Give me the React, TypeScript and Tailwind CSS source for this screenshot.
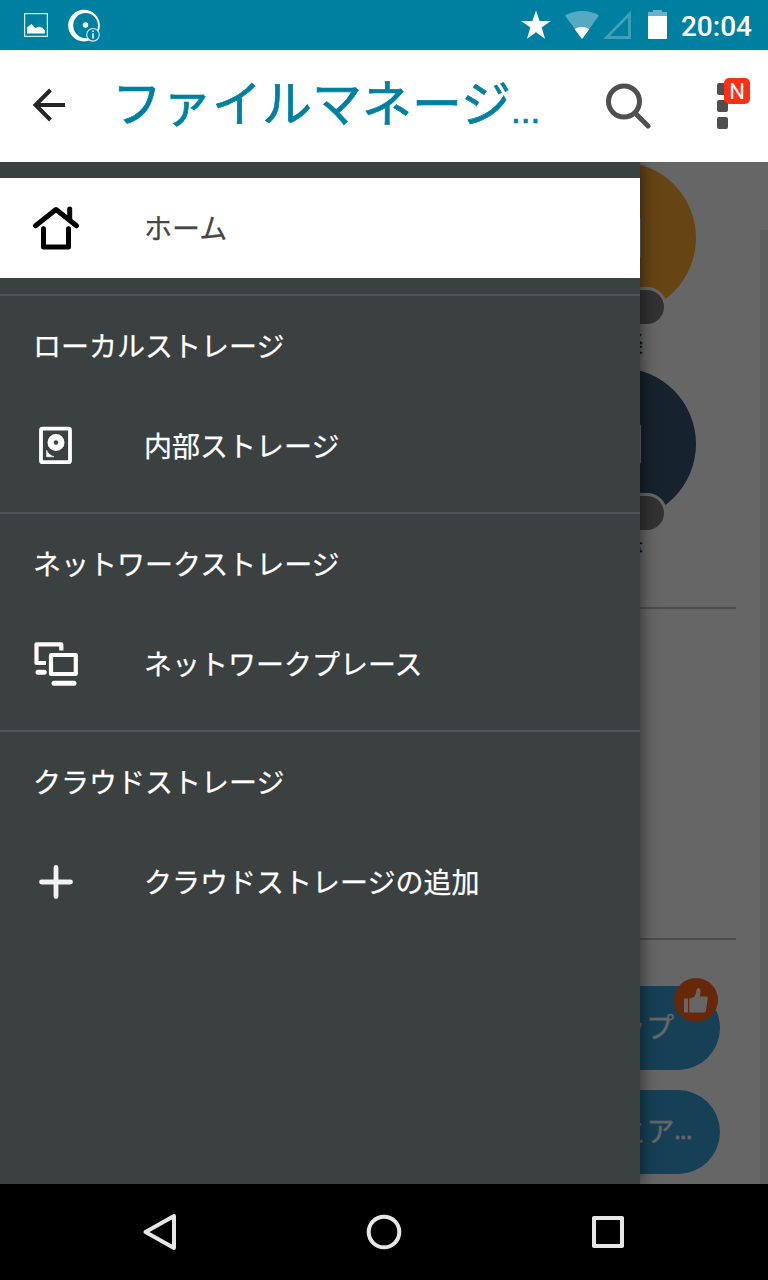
import type { ReactNode } from "react"

const StatusBar = () => (
    <div className="flex h-[50px] items-center justify-between bg-[#0080a1] text-white">
        <div className="flex items-center pl-6">
            <svg width="24" height="24" viewBox="0 0 24 24">
                <rect x="0.6" y="0.6" width="22.8" height="22.8" fill="none" stroke="#cfe8ef" strokeWidth="1.3" />
                <path d="M3 14.5 7.3 11l4 4 3.7-1.2 3.5 1 2.3 2.5V20.5H3z" fill="#fff" />
            </svg>
            <svg className="ml-5" width="33" height="33" viewBox="0 0 33 33">
                <path fillRule="evenodd" d="M16 .8a15.8 15.8 0 1 0 0 31.6A15.8 15.8 0 1 0 16 .8zm1.6 3.2a12.4 12.6 0 1 1 0 25.2 12.4 12.6 0 1 1 0-25.2z" fill="#fff" />
                <circle cx="17.5" cy="16" r="2.7" fill="#fff" />
                <circle cx="25" cy="25.8" r="6.3" fill="#0080a1" stroke="#d8ecf1" strokeWidth="1.1" />
                <path d="M25 24.3v5.2M25 21.6v1.4" stroke="#fff" strokeWidth="1.5" />
            </svg>
        </div>
        <div className="flex items-center pr-4">
            <svg width="30" height="30" viewBox="0 0 30 30" fill="#fff">
                <path d="M15 0.5 18.6 11H29.7L20.7 17.6 24 28.7 15 22.2 6 28.7 9.3 17.6 0.3 11H11.4z" />
            </svg>
            <svg className="ml-3.5" width="34" height="28" viewBox="0 0 34 28">
                <path d="M0 4.5Q7 0 17 0t17 4.5L17 28z" fill="#55a9c0" />
                <path d="M9.6 18Q13 16 17 16t7.4 2L17 28z" fill="#fff" />
            </svg>
            <svg className="ml-1" width="29" height="28" viewBox="0 0 29 28">
                <path d="M3.5 26.5H26.5V3z" fill="none" stroke="#409fb9" strokeWidth="2.8" />
            </svg>
            <svg className="mb-px ml-4" width="19" height="29" viewBox="0 0 19 29">
                <path d="M5 0h9v2h5v4H0V2h5z" fill="#66b3c7" />
                <path d="M0 6h19v23H0z" fill="#fff" />
            </svg>
            <span className="ml-[13px] w-[72px] whitespace-nowrap pt-1 text-right font-['Roboto',sans-serif] text-[28px] leading-none font-medium">20:04</span>
        </div>
    </div>
)

const ActionBar = () => (
    <div className="flex h-[112px] items-center bg-white">
        <svg className="mb-[3px] ml-8" width="34" height="36" viewBox="0 0 34 36" fill="none" stroke="#262626" strokeWidth="4">
            <path d="M33 18H4M18.5 3 3.5 18l15 15" />
        </svg>
        <h1 className="ml-[46px] flex h-[70px] w-[441px] whitespace-nowrap pt-1 text-[50px] leading-none font-normal text-[#0080a1] [-webkit-text-stroke:0.7px_#0080a1]">
            ファイルマネージ
            <span className="pt-[11px] font-['Liberation_Sans',sans-serif] text-[35px] leading-[50px]">...</span>
        </h1>
        <svg className="ml-[52px]" width="46" height="46" viewBox="0 0 46 46" fill="none" stroke="#4f4f4f" strokeWidth="5" strokeLinecap="round">
            <circle cx="19" cy="18.5" r="15.5" />
            <path d="m31 31 12 12" />
        </svg>
        <div className="relative ml-[66px] flex w-[11px] flex-col gap-[5px]">
            <span className="h-3 rounded-xs bg-[#4f4f4f]" />
            <span className="h-3 rounded-xs bg-[#4f4f4f]" />
            <span className="h-3 rounded-xs bg-[#4f4f4f]" />
            <span className="absolute -top-[5px] left-[7px] flex size-[26px] items-center justify-center rounded-[5px] bg-[#ff2f14] pt-0.5 font-['Roboto',sans-serif] text-[22px] leading-none text-white">N</span>
        </div>
    </div>
)

const Category = ({ label, color }: { label: string; color: string }) => (
    <div className="flex h-[206px] w-[152px] flex-col items-center">
        <div className={`relative flex size-[152px] shrink-0 items-center justify-center rounded-full ${color}`}>
            <span className="h-10 w-[42px] rounded-xs border-2 border-white" />
            <span className="absolute top-[125px] right-[29px] h-[40px] w-[90px] rounded-[20px] border-3 border-white bg-[#7d7d7d]" />
        </div>
        <span className="mt-3.5 text-[23px] leading-7 text-[#222] [-webkit-text-stroke:0.5px_#222]">{label}</span>
    </div>
)

const Page = () => (
    <div className="flex h-full flex-col bg-white">
        <div className="flex h-[445px] flex-col items-end pr-[72px]">
            <Category label="音楽" color="bg-[#ffaa32]" />
            <Category label="文書" color="bg-[#375571]" />
        </div>
        <div className="mx-8 h-[333px] border-y-2 border-[#bebebe]" />
        <div className="mt-[46px] flex flex-col items-end gap-5 pr-12 text-[28px] leading-none text-white [-webkit-text-stroke:0.3px_#fff]">
            <div className="relative flex h-[84px] w-[326px] items-center justify-end rounded-full bg-[#37a0d7] pr-[46px] pb-1">
                クリーンアップ
                <span className="absolute -top-2 right-0.5 flex size-11 items-center justify-center rounded-full bg-[#ff6416]">
                    <svg width="24" height="25" viewBox="0 0 24 25" fill="#fff">
                        <path d="M0 10.5h4v14H0zM5.3 10.5 9.8 9.2Q12.2 7 12.4 2.2 12.8 0 14.5 0q2.2.3 2.2 3L15.8 8.5h6.5q1.7 0 1.5 1.7L21.8 23q-.2 1.5-2 1.5H5.3z" />
                    </svg>
                </span>
            </div>
            <div className="flex h-[84px] w-[326px] items-center justify-end rounded-full bg-[#37a0d7] pr-[28px] pb-1">
                ファイルとア<span className="pt-1 font-['Liberation_Sans',sans-serif] text-[21px] leading-[38px] font-bold">...</span>
            </div>
        </div>
    </div>
)

const HomeIcon = () => (
    <svg width="48" height="48" viewBox="32 204 48 48" fill="none" stroke="#000" strokeWidth="5" strokeLinecap="round" strokeLinejoin="round">
        <path d="M35.5 225.8 56 209.5 76.5 225.8M69.7 209v10" />
        <path d="M43.5 228.8V247h25V228.8" />
    </svg>
)

const DiskIcon = () => (
    <svg width="48" height="48" viewBox="32 422 48 48" fill="none" stroke="#fff">
        <rect x="41" y="428.7" width="29" height="33.5" rx="1.5" strokeWidth="3.8" />
        <circle cx="56" cy="442.5" r="5.4" strokeWidth="6.2" />
        <path d="M46.5 450q1.5 4.5 7.5 6.8h-7.5z" fill="#fff" strokeWidth="0.5" />
    </svg>
)

const NetworkIcon = () => (
    <svg width="48" height="48" viewBox="32 640 48 48" fill="none" stroke="#fffafa" strokeWidth="4.2" strokeLinejoin="round">
        <path d="M61.3 650.5V644.3H36.5V663H46" />
        <rect x="51" y="655" width="24.8" height="19" />
        <path d="M38 672.3h6.2M54 683.2h20" strokeWidth="5" strokeLinecap="round" />
    </svg>
)

const PlusIcon = () => (
    <svg width="48" height="48" viewBox="0 0 48 48" fill="none" stroke="#f2f2f2" strokeWidth="4.8" strokeLinecap="round">
        <path d="M24 9.5v29M9.5 24h29" />
    </svg>
)

const DrawerItem = ({ icon, label, active }: { icon: ReactNode; label: string; active?: boolean }) => (
    <div className={`flex h-[100px] items-center gap-16 pl-8 ${active ? "bg-white text-[#464646]" : "text-white"}`}>
        {icon}
        <span className="pb-0.5">{label}</span>
    </div>
)

const sections = [
    { title: "ローカルストレージ", item: "内部ストレージ", icon: <DiskIcon /> },
    { title: "ネットワークストレージ", item: "ネットワークプレース", icon: <NetworkIcon /> },
    { title: "クラウドストレージ", item: "クラウドストレージの追加", icon: <PlusIcon /> },
]

const Drawer = () => (
    <nav className="absolute inset-y-0 left-0 w-[640px] bg-[#3b4041] text-[28px] leading-none shadow-[2px_0_14px_rgba(0,0,0,0.5)] [-webkit-text-stroke:0.25px_currentColor]">
        <div className="py-4">
            <DrawerItem icon={<HomeIcon />} label="ホーム" active />
        </div>
        {sections.map((section) => (
            <section key={section.title} className="border-t-2 border-[#505657] pb-4">
                <h2 className="flex h-[100px] items-center pb-0.5 pl-[33px] text-white">{section.title}</h2>
                <DrawerItem icon={section.icon} label={section.item} />
            </section>
        ))}
    </nav>
)

const NavigationBar = () => (
    <div className="flex h-24 items-center justify-between bg-black px-[140px]">
        <svg width="40" height="40" viewBox="0 0 40 40" fill="none" stroke="#e6e6e6" strokeWidth="4" strokeLinejoin="round">
            <path d="M5.5 20 34 4v32z" />
        </svg>
        <svg width="40" height="40" viewBox="0 0 40 40" fill="none" stroke="#e6e6e6" strokeWidth="4">
            <circle cx="20" cy="20" r="15.3" />
        </svg>
        <svg width="40" height="40" viewBox="0 0 40 40" fill="none" stroke="#e6e6e6" strokeWidth="4" strokeLinejoin="round">
            <rect x="6" y="6" width="28" height="28" />
        </svg>
    </div>
)

export default function App() {
    return (
        <div className="h-[1280px] w-[768px] overflow-hidden font-['Noto_Sans_CJK_JP',sans-serif]">
            <StatusBar />
            <ActionBar />
            <main className="relative h-[1022px] overflow-hidden">
                <Page />
                {/* scroll track */}
                <div className="absolute top-[68px] right-0 bottom-0 w-2 bg-black/8" />
                <div className="absolute inset-0 bg-black/60" />
                <Drawer />
            </main>
            <NavigationBar />
        </div>
    )
}
